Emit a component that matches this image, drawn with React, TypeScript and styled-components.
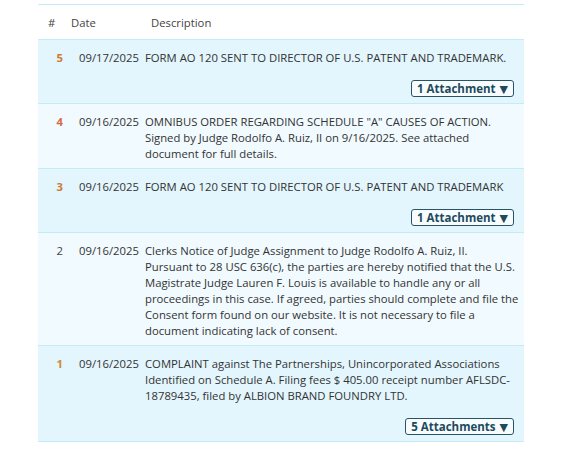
import React from "react";
import styled, { createGlobalStyle } from "styled-components";

const Global = createGlobalStyle`
  html, body { margin: 0; padding: 0; background: #ffffff; }
  body { font-family: "Open Sans", "Noto Sans", "DejaVu Sans", sans-serif; color: #333; }
`;

const Page = styled.div`
  padding: 4px 0 0 38px;
  width: 486px;
`;

const Table = styled.div`
  width: 486px;
  border-top: 1px solid #c3ebf8;
`;

const HeaderRow = styled.div`
  display: grid;
  grid-template-columns: 23px 80px 1fr;
  padding-left: 10px;
  height: 34px;
  align-items: center;
  font-size: 11.3px;
  color: #444;
  border-bottom: 1px solid #c3ebf8;
`;

const Row = styled.div<{ $tint: boolean }>`
  display: grid;
  grid-template-columns: 36px 66px 1fr;
  padding: 10px 0 6px;
  min-height: 47px;
  box-sizing: border-box;
  background: ${(p) => (p.$tint ? "#e3f6fd" : "#f1fafe")};
  border-bottom: 1px solid #c3ebf8;
  font-size: 11.3px;
  line-height: 16px;
`;

const Num = styled.div<{ $color: string; $bold: boolean }>`
  text-align: right;
  padding-right: 11px;
  font-weight: ${(p) => (p.$bold ? 700 : 400)};
  color: ${(p) => p.$color};
`;

const DateCell = styled.div`
  padding-left: 5px;
  color: #333;
`;

const Desc = styled.div`
  padding: 0 10px 0 5px;
  color: #333;
`;

const Line = styled.span`
  display: block;
  white-space: nowrap;
`;

const ButtonRow = styled.div`
  display: flex;
  justify-content: flex-end;
  margin-top: 14px;
`;

const AttachButton = styled.button`
  font-family: inherit;
  font-size: 11.5px;
  font-weight: 700;
  color: #1d4a5c;
  background: #f7fdff;
  border: 1px solid #2a5466;
  border-radius: 3px;
  height: 17px;
  padding: 0 5px;
  line-height: 14px;
  display: flex;
  align-items: center;
  gap: 4px;
  cursor: pointer;
`;

const Caret = styled.span`
  font-size: 11px;
`;

type Entry = {
  n: string;
  color: string;
  date: string;
  lines: string[];
  attachments?: number;
};

const entries: Entry[] = [
  {
    n: "5",
    color: "#cf7a34",
    date: "09/17/2025",
    lines: ["FORM AO 120 SENT TO DIRECTOR OF U.S. PATENT AND TRADEMARK."],
    attachments: 1,
  },
  {
    n: "4",
    color: "#d66a48",
    date: "09/16/2025",
    lines: [
      'OMNIBUS ORDER REGARDING SCHEDULE "A" CAUSES OF ACTION.',
      "Signed by Judge Rodolfo A. Ruiz, II on 9/16/2025. See attached",
      "document for full details.",
    ],
  },
  {
    n: "3",
    color: "#cf7a34",
    date: "09/16/2025",
    lines: ["FORM AO 120 SENT TO DIRECTOR OF U.S. PATENT AND TRADEMARK"],
    attachments: 1,
  },
  {
    n: "2",
    color: "#444",
    date: "09/16/2025",
    lines: [
      "Clerks Notice of Judge Assignment to Judge Rodolfo A. Ruiz, II.",
      "Pursuant to 28 USC 636(c), the parties are hereby notified that the U.S.",
      "Magistrate Judge Lauren F. Louis is available to handle any or all",
      "proceedings in this case. If agreed, parties should complete and file the",
      "Consent form found on our website. It is not necessary to file a",
      "document indicating lack of consent.",
    ],
  },
  {
    n: "1",
    color: "#cf8a34",
    date: "09/16/2025",
    lines: [
      "COMPLAINT against The Partnerships, Unincorporated Associations",
      "Identified on Schedule A. Filing fees $ 405.00 receipt number AFLSDC-",
      "18789435, filed by ALBION BRAND FOUNDRY LTD.",
    ],
    attachments: 5,
  },
];

export default function App() {
  return (
    <>
      <Global />
      <Page>
        <Table>
          <HeaderRow>
            <span>#</span>
            <span>Date</span>
            <span>Description</span>
          </HeaderRow>
          {entries.map((e) => (
            <Row key={e.n} $tint={!!e.attachments}>
              <Num $color={e.color} $bold={e.n !== "2"}>{e.n}</Num>
              <DateCell>{e.date}</DateCell>
              <Desc>
                {e.lines.map((l, i) => (
                  <Line key={i}>{l}</Line>
                ))}
                {e.attachments ? (
                  <ButtonRow>
                    <AttachButton>
                      {e.attachments} {e.attachments === 1 ? "Attachment" : "Attachments"}
                      <Caret>▼</Caret>
                    </AttachButton>
                  </ButtonRow>
                ) : null}
              </Desc>
            </Row>
          ))}
        </Table>
      </Page>
    </>
  );
}
